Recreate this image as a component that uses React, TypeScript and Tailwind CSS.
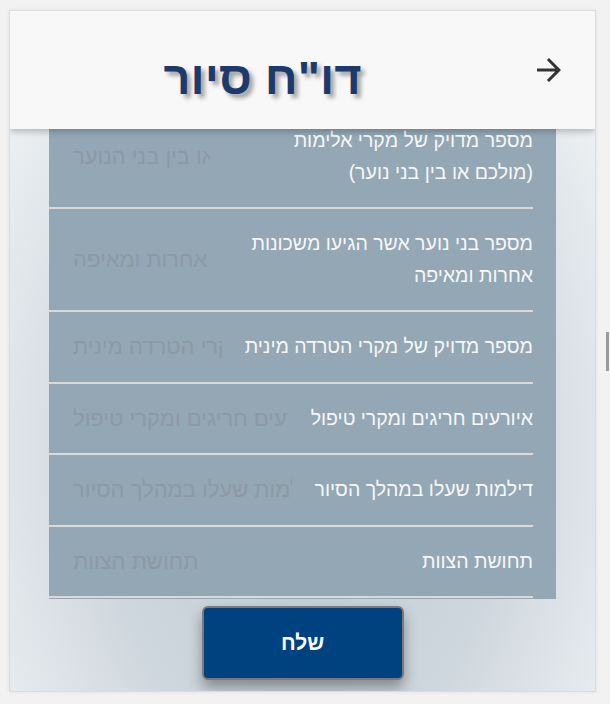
import { ReactNode } from "react";

type Row = { label: ReactNode; hint: string; wide?: boolean };

const rows: Row[] = [
	{
		label: (
			<>
				מספר מדויק של מקרי אלימות
				<br />
				(מולכם או בין בני נוער)
			</>
		),
		hint: "מקרי אלימות מולכם או בין בני הנוער",
		wide: true,
	},
	{
		label: (
			<>
				מספר בני נוער אשר הגיעו משכונות
				<br />
				אחרות ומאיפה
			</>
		),
		hint: "אחרות ומאיפה",
		wide: true,
	},
	{ label: "מספר מדויק של מקרי הטרדה מינית", hint: "מספר מדויק של מקרי הטרדה מינית" },
	{ label: "איורעים חריגים ומקרי טיפול", hint: "איורעים חריגים ומקרי טיפול" },
	{ label: "דילמות שעלו במהלך הסיור", hint: "דילמות שעלו במהלך הסיור" },
	{ label: "תחושת הצוות", hint: "תחושת הצוות" },
];

function ArrowIcon() {
	return (
		<svg width="36" height="36" viewBox="0 0 24 24" fill="#333">
			<path d="M12 4l-1.41 1.41L16.17 11H4v2h12.17l-5.58 5.59L12 20l8-8z" />
		</svg>
	);
}

export default function App() {
	return (
		<div
			className="min-h-[704px] bg-[#f2f2f2] pl-[9px] pr-[14px] pt-[10px]"
			style={{ fontFamily: '"Liberation Sans", "DejaVu Sans", Arial, sans-serif' }}
		>
			<div className="flex h-[682px] flex-col overflow-hidden border border-[#dcdcdc] bg-[radial-gradient(ellipse_at_50%_65%,#bfcad3_0%,#cfd7de_50%,#f6f8f9_100%)] shadow-[0_0_4px_rgba(0,0,0,0.08)]">
				<header
					dir="rtl"
					className="relative z-10 flex h-[118px] shrink-0 items-center bg-[#f8f8f8] shadow-[0_3px_6px_rgba(0,0,0,0.22)]"
				>
					<button className="flex h-full w-[80px] items-center justify-center pr-[12px]">
						<ArrowIcon />
					</button>
					<h1 className="flex-1 pt-[16px] text-center text-[47px] font-bold text-[#1c3a6b] [text-shadow:4px_4px_4px_rgba(0,0,0,0.35)]">
						דו"ח סיור
					</h1>
				</header>

				<div className="h-[470px] shrink-0 overflow-hidden">
					<div dir="rtl" className="mx-[39px] -mt-[23px] bg-[#93a7b5] pr-[23px] pb-[2px]">
						{rows.map((row, i) => (
							<div
								key={i}
								className="flex items-center gap-[23px] border-b-2 border-[#dadada] py-[19px] pl-[24px]"
							>
								<div
									className={
										"shrink-0 text-[19.5px] leading-[31.5px] text-[#f7f7f7] " +
										(row.wide ? "w-[300px]" : "max-w-[300px]")
									}
								>
									{row.label}
								</div>
								<div
									dir="ltr"
									className="min-w-0 flex-1 overflow-hidden whitespace-nowrap text-left text-[22px] leading-[31.5px] text-[#8d99a3]"
								>
									{row.hint}
								</div>
							</div>
						))}
					</div>
				</div>

				<div className="flex flex-1 justify-center pt-[7px]">
					<button className="h-[74px] w-[202px] rounded-[6px] border-2 border-[#7a7a7a] bg-[#00427f] text-[21px] font-semibold text-white shadow-[0_8px_14px_rgba(0,0,0,0.35)]">
						שלח
					</button>
				</div>
			</div>
			<div className="fixed right-[1px] top-[332px] h-[39px] w-[3px] bg-[#9a9a9a]" />
		</div>
	);
}
